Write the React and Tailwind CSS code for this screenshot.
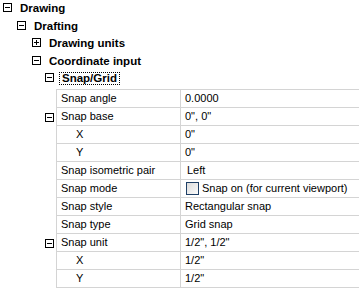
import React from "react";

const font = { fontFamily: '"Liberation Sans", Arial, sans-serif' };

function Box({ plus = false, className = "" }) {
  return (
    <span className={"relative inline-block w-[9px] h-[9px] border border-black bg-white shrink-0 " + className}>
      <span className="absolute left-[1px] top-[3px] w-[5px] h-[1px] bg-black" />
      {plus && <span className="absolute left-[3px] top-[1px] w-[1px] h-[5px] bg-black" />}
    </span>
  );
}

function Header({ indent, label, plus, h }) {
  return (
    <div className={"flex items-center " + h}>
      <div className={indent + " flex items-center"}>
        <Box plus={plus} className="mb-[3px]" />
      </div>
      <span className="ml-[8px] font-bold text-[11.5px]">{label}</span>
    </div>
  );
}

const rows = [
  { label: "Snap angle", value: "0.0000" },
  { label: "Snap base", value: "0\", 0\"", expand: true },
  { label: "X", value: "0\"", child: true },
  { label: "Y", value: "0\"", child: true },
  { label: "Snap isometric pair", value: "Left", extra: true },
  { label: "Snap mode", checkbox: true, value: "Snap on (for current viewport)" },
  { label: "Snap style", value: "Rectangular snap" },
  { label: "Snap type", value: "Grid snap" },
  { label: "Snap unit", value: "1/2\", 1/2\"", expand: true },
  { label: "X", value: "1/2\"", child: true },
  { label: "Y", value: "1/2\"", child: true },
];

export default function App() {
  return (
    <div className="w-[359px] h-[288px] bg-white overflow-hidden text-black text-[11px]" style={font}>
      <Header indent="pl-[3px]" label="Drawing" h="h-[18px]" />
      <Header indent="pl-[17px]" label="Drafting" h="h-[17px]" />
      <Header indent="pl-[32px]" label="Drawing units" plus h="h-[18px]" />
      <Header indent="pl-[32px]" label="Coordinate input" h="h-[17px]" />
      <div className="flex items-center h-[17px]">
        <div className="pl-[45px] flex items-center">
          <Box className="mb-[3px]" />
        </div>
        <span className="ml-[5px] px-[2px] h-[13px] flex items-center border border-dotted border-black font-bold text-[11.5px] whitespace-nowrap">Snap/Grid</span>
      </div>
      <div className="mt-[3px]">
        {rows.map((r, i) => (
          <div key={i} className="flex h-[18px]">
            <div className="w-[56px] shrink-0 flex items-center">
              {r.expand && <Box className="ml-[45px]" />}
            </div>
            <div className={"flex flex-1 border-b border-[#d4d4d4] " + (i === 0 ? "border-t h-[19px] -mt-[1px]" : "")}>
              <div className={"w-[125px] shrink-0 border-l border-r border-[#d4d4d4] flex items-center whitespace-nowrap " + (r.child ? "pl-[19px]" : "pl-[4px]")}>
                {r.label}
              </div>
              <div className={"flex items-center flex-1 whitespace-nowrap " + (r.extra ? "pl-[6px]" : "pl-[4px]")}>
                {r.checkbox && (
                  <span className="inline-block shrink-0 w-[13px] h-[13px] border border-[#1e3f66] bg-gradient-to-br from-[#dcdcdc] to-[#fafafa] mr-[3px] ml-[1px]" />
                )}
                {r.value}
              </div>
            </div>
          </div>
        ))}
      </div>
    </div>
  );
}
